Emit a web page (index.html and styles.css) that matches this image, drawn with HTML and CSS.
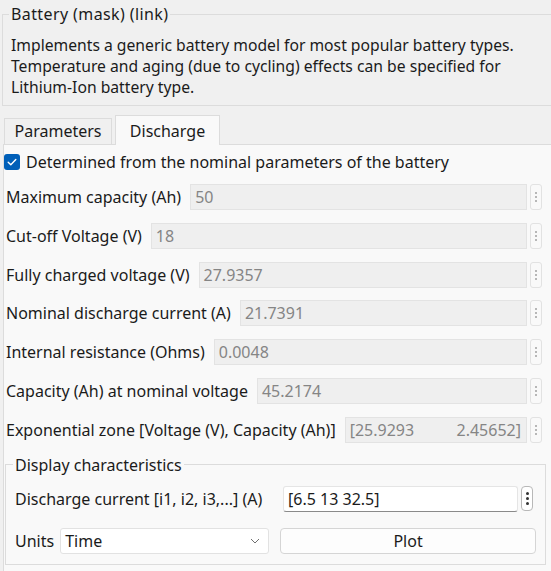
FILE: index.html
```html
<!DOCTYPE html>
<html>
<head>
<meta charset="utf-8">
<link rel="stylesheet" href="styles.css">
</head>
<body>
<div class="page">
  <fieldset class="header">
    <legend class="header-title">Battery (mask) (link)</legend>
    <p class="desc">Implements a generic battery model for most popular battery types. Temperature and aging (due to cycling) effects can be specified for Lithium-Ion battery type.</p>
  </fieldset>

  <div class="tabs">
    <div class="tab">Parameters</div>
    <div class="tab tab-active">Discharge</div>
  </div>

  <div class="panel">
    <div class="panel-inner">
      <div class="check-row">
        <span class="checkbox"><svg width="16" height="16" viewBox="0 0 16 16"><polyline points="4.2,8.3 6.8,10.8 11.8,5.6" fill="none" stroke="#fff" stroke-width="1.4" stroke-linecap="round" stroke-linejoin="round"/></svg></span>
        <span class="check-label">Determined from the nominal parameters of the battery</span>
      </div>

      <div class="row"><span class="label">Maximum capacity (Ah)</span><span class="field">50</span><span class="dots"><i></i><i></i><i></i></span></div>
      <div class="row"><span class="label">Cut-off Voltage (V)</span><span class="field">18</span><span class="dots"><i></i><i></i><i></i></span></div>
      <div class="row"><span class="label">Fully charged voltage (V)</span><span class="field">27.9357</span><span class="dots"><i></i><i></i><i></i></span></div>
      <div class="row"><span class="label">Nominal discharge current (A)</span><span class="field">21.7391</span><span class="dots"><i></i><i></i><i></i></span></div>
      <div class="row"><span class="label">Internal resistance (Ohms)</span><span class="field">0.0048</span><span class="dots"><i></i><i></i><i></i></span></div>
      <div class="row"><span class="label">Capacity (Ah) at nominal voltage</span><span class="field">45.2174</span><span class="dots"><i></i><i></i><i></i></span></div>
      <div class="row"><span class="label">Exponential zone [Voltage (V), Capacity (Ah)]</span><span class="field field-exp"><span>[25.9293</span><span>2.45652]</span></span><span class="dots"><i></i><i></i><i></i></span></div>

      <fieldset class="display">
        <legend class="display-title">Display characteristics</legend>
        <div class="drow">
          <span class="label">Discharge current [i1, i2, i3,...] (A)</span>
          <span class="field-edit">[6.5 13 32.5]</span>
          <span class="dots dots-active"><i></i><i></i><i></i></span>
        </div>
        <div class="drow drow-units">
          <span class="label">Units</span>
          <span class="select">Time<svg class="chev" width="10" height="6" viewBox="0 0 10 6"><polyline points="1,1 5,5 9,1" fill="none" stroke="#707070" stroke-width="1"/></svg></span>
          <span class="button">Plot</span>
        </div>
      </fieldset>
    </div>
  </div>
</div>
</body>
</html>
```

FILE: styles.css
```css
* { box-sizing: border-box; }
html, body {
  margin: 0;
  padding: 0;
  background: #f0f0f0;
  overflow: hidden;
}
body {
  font-family: "Noto Sans", "Open Sans", sans-serif;
  font-size: 16px;
  color: #1b1b1b;
  width: 551px;
  height: 571px;
}
.page {
  width: 551px;
  height: 571px;
  overflow: hidden;
  padding-top: 4px;
}
.header {
  margin: 0 0 0 2px;
  width: 570px;
  border: 1px solid #dcdcdc;
  padding: 0 0 7px 8px;
  min-width: 0;
}
.header-title {
  padding: 0 2px;
  margin-left: -2px;
  line-height: 20px;
  letter-spacing: 0.4px;
}
.desc {
  margin: 11px 0 0 0;
  width: 530px;
  font-size: 15.7px;
  line-height: 21px;
}
.tabs {
  display: flex;
  align-items: flex-end;
  margin-top: 9px;
  padding-left: 4px;
  height: 29px;
  position: relative;
  z-index: 1;
}
.tab {
  height: 26px;
  border: 1px solid #dcdcdc;
  border-bottom: none;
  background: #f0f0f0;
  line-height: 25px;
  width: 108px;
  text-align: center;
}
.tab-active {
  height: 30px;
  width: 105px;
  margin-left: 3px;
  background: #f9f9f9;
  margin-bottom: -1px;
  line-height: 30px;
}
.panel {
  margin-left: 3px;
  width: 570px;
  height: 440px;
  background: #f9f9f9;
  border: 1px solid #dcdcdc;
  padding: 8px 0 0 1px;
}
.panel-inner {
  width: 537px;
  padding-left: 1px;
}
.check-row {
  display: flex;
  align-items: center;
  height: 18px;
  margin-left: -2px;
}
.checkbox {
  width: 16px;
  height: 16px;
  border-radius: 3px;
  background: #005fb8;
  display: inline-flex;
  margin-right: 6px;
}
.check-label { line-height: 18px; }
.row {
  display: flex;
  align-items: center;
  height: 26px;
  margin-top: 12.83px;
}
.check-row + .row { margin-top: 13px; }
.label {
  white-space: nowrap;
  margin-right: 9px;
}
.field {
  flex: 1;
  height: 26px;
  background: #efefef;
  border: 1px solid #e3e3e3;
  color: #858585;
  padding: 0 4px;
  line-height: 24px;
  margin-right: 3px;
}
.field-exp {
  display: flex;
  justify-content: space-between;
  padding: 0 5px 0 4px;
}
.dots {
  width: 12px;
  height: 26px;
  border: 1px solid #e2e2e2;
  border-radius: 3px;
  display: flex;
  flex-direction: column;
  align-items: center;
  justify-content: center;
  gap: 2px;
}
.dots i {
  display: block;
  width: 2px;
  height: 2px;
  background: #a0a0a0;
  border-radius: 1px;
}
.display {
  margin: 12px 0 0 -1px;
  width: 541px;
  border: 1px solid #dcdcdc;
  padding: 0 9px 10px 9px;
  min-width: 0;
}
.display-title {
  padding: 0 2px;
  margin-left: -2px;
  line-height: 20px;
}
.drow {
  display: flex;
  align-items: center;
  height: 26px;
  margin-top: 11px;
}
.drow-units { margin-top: 16px; }
.drow .label { flex: 1; }
.field-edit {
  width: 235px;
  height: 26px;
  background: #fff;
  border: 1px solid #e5e5e5;
  border-bottom: 1px solid #8a8a8a;
  border-radius: 3px;
  padding: 0 4px;
  line-height: 24px;
  margin-right: 3px;
}
.dots-active {
  background: #fff;
  border-color: #b8b8b8;
  border-radius: 4px;
  height: 25px;
  margin-top: -1px;
  margin-right: 3px;
}
.dots-active i { background: #333; width: 3px; height: 3px; border-radius: 1.5px; }
.drow-units .label { flex: none; margin-right: 6px; }
.select {
  width: 209px;
  height: 26px;
  background: #fff;
  border: 1px solid #e2e2e2;
  border-radius: 3px;
  padding: 0 4px;
  line-height: 24px;
  display: flex;
  align-items: center;
  justify-content: space-between;
  margin-right: 11px;
}
.chev { margin-right: 4px; }
.button {
  flex: 1;
  height: 26px;
  background: #fdfdfd;
  border: 1px solid #d5d5d5;
  border-radius: 4px;
  text-align: center;
  line-height: 24px;
}
```
